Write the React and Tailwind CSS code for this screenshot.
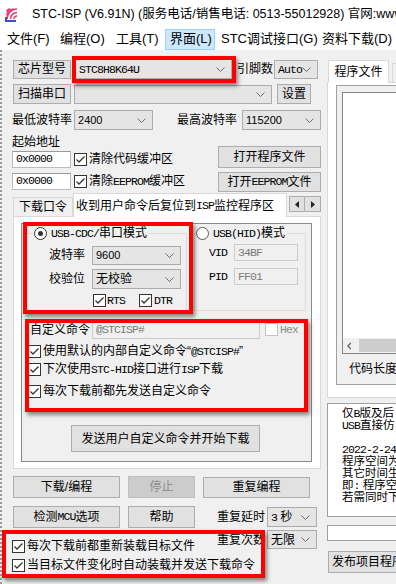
import React from "react";

const MONO = "font-['Liberation_Mono',monospace] text-[11.5px] tracking-[-0.9px]";

// ASCII runs are drawn in a narrow mono face, like SimSun's half-width glyphs
function T({ s }) {
  const parts = s.split(/([\x21-\x7e](?:[\x20-\x7e]*[\x21-\x7e])?)/);
  return parts.map((p, i) =>
    i % 2 === 1 ? (
      <span key={i} className={MONO}>
        {p}
      </span>
    ) : (
      p
    )
  );
}

function Chevron() {
  return (
    <svg width="9" height="5" viewBox="0 0 9 5" className="shrink-0">
      <path d="M0.5 0.5 L4.5 4.5 L8.5 0.5" fill="none" stroke="#6d6d6d" strokeWidth="1" />
    </svg>
  );
}

function Check({ on = true, dim = false }) {
  return (
    <span
      className={`flex h-[13px] w-[13px] shrink-0 items-center justify-center border bg-white ${
        dim ? "border-[#c4c4c4]" : "border-[#333333]"
      }`}
    >
      {on && (
        <svg width="11" height="11" viewBox="0 0 11 11">
          <path d="M1.5 5.5 L4 8 L9.5 2.5" fill="none" stroke="#333333" strokeWidth="1.3" />
        </svg>
      )}
    </span>
  );
}

function Radio({ on = false }) {
  return (
    <span
      className={`flex h-[13px] w-[13px] shrink-0 items-center justify-center rounded-full border bg-white ${
        on ? "border-[#333333]" : "border-[#5a5a5a]"
      }`}
    >
      {on && <span className="h-[5px] w-[5px] rounded-full bg-[#333333]" />}
    </span>
  );
}

function Btn({ className = "", disabled = false, children }) {
  return (
    <div
      className={`flex shrink-0 items-center justify-center whitespace-nowrap border ${
        disabled
          ? "border-[#bfbfbf] bg-[#cccccc] text-[#8d8d8d]"
          : "border-[#adadad] bg-[#e1e1e1] text-black"
      } ${className}`}
    >
      {children}
    </div>
  );
}

function Combo({ className = "", children }) {
  return (
    <div
      className={`flex shrink-0 items-center justify-between border border-[#acacac] bg-[#e5e5e5] pl-[3px] pr-[6px] ${className}`}
    >
      <span className="whitespace-nowrap">{children}</span>
      <Chevron />
    </div>
  );
}

function Field({ className = "", disabled = false, children }) {
  return (
    <div
      className={`flex shrink-0 items-center border pl-[3px] ${
        disabled
          ? "border-[#cccccc] bg-[#f0f0f0] text-[#7a7a7a]"
          : "border-[#bcbcbc] border-t-[#9a9a9a] bg-white"
      } ${className}`}
    >
      {children}
    </div>
  );
}

function CheckRow({ className = "", children }) {
  return (
    <div className={`flex h-[14px] items-center whitespace-nowrap ${className}`}>
      <Check />
      <span className="ml-[2px]">{children}</span>
    </div>
  );
}

function Logo() {
  return (
    <svg width="20" height="17" viewBox="0 0 20 17">
      <path d="M3 13 A10 10 0 0 1 13 3" fill="none" stroke="#ec3a74" strokeWidth="1.6" />
      <path d="M3 9.5 A6.5 6.5 0 0 1 9.5 3" fill="none" stroke="#ec3a74" strokeWidth="1.6" />
      <path d="M6.5 13 A6.5 6.5 0 0 1 13 6.5" fill="none" stroke="#ec3a74" strokeWidth="1.6" />
      <path d="M10 13 A3 3 0 0 1 13 10" fill="none" stroke="#ec3a74" strokeWidth="1.6" />
      <path d="M3 6 A3 3 0 0 1 6 3" fill="none" stroke="#ec3a74" strokeWidth="1.6" />
      <rect x="1" y="14" width="11" height="2" fill="#3c4fd0" />
      <rect x="1" y="11" width="2" height="3" fill="#3c4fd0" />
    </svg>
  );
}

const menus = [
  { label: "文件(F)", cls: "w-[53px]" },
  { label: "编程(O)", cls: "w-[56px]" },
  { label: "工具(T)", cls: "w-[53px]" },
  { label: "界面(L)", cls: "w-[50px] mr-[2px] bg-[#cce8ff] border border-[#99d1ff]" },
  { label: "STC调试接口(G)", cls: "w-[101px]" },
  { label: "资料下载(D)", cls: "w-[80px]" },
];

const notes = ["仅B版及后", "USB直接仿", "", "2022-2-24", "程序空间为", "其它时间生", "即: 程序空", "若需同时下"];

export default function App() {
  return (
    <div className="relative h-[584px] w-[396px] overflow-hidden bg-[#f0f0f0] font-['Liberation_Sans','Noto_Sans_CJK_SC',sans-serif] text-[12px] leading-[14px] text-black">
      {/* title bar */}
      <div className="flex h-[28px] items-center bg-white">
        <div className="ml-[4px]">
          <Logo />
        </div>
        <span className="ml-[8px] whitespace-nowrap text-[12.5px]">
          STC-ISP (V6.91N) (服务电话/销售电话: 0513-55012928) 官网:www.stcmcudata.com
        </span>
      </div>

      {/* menu bar */}
      <div className="flex h-[22px] items-center bg-white pl-[3px] text-[13px]">
        {menus.map((m) => (
          <div key={m.label} className={`flex h-[21px] shrink-0 items-center whitespace-nowrap px-[4px] ${m.cls}`}>
            {m.label}
          </div>
        ))}
      </div>

      <div className="flex h-[534px]">
        <div className="w-[3px] shrink-0 border-l-2 border-dotted border-[#9a9a9a]" />

        {/* left column */}
        <div className="w-[321px] shrink-0">
          <div className="mt-[9px] flex h-[20px] items-center">
            <Btn className="ml-[10px] h-[19px] w-[58px]">芯片型号</Btn>
            <Combo className="ml-[4px] h-[20px] w-[157px]">
              <T s="STC8H8K64U" />
            </Combo>
            <span className="ml-[5px] whitespace-nowrap">引脚数</span>
            <Combo className="ml-[1px] h-[19px] w-[44px]">
              <T s="Auto" />
            </Combo>
          </div>

          <div className="mt-[5px] flex h-[20px] items-center">
            <Btn className="ml-[10px] h-[20px] w-[58px]">扫描串口</Btn>
            <Combo className="ml-[3px] h-[19px] w-[198px]" />
            <Btn className="ml-[5px] h-[20px] w-[34px]">设置</Btn>
          </div>

          <div className="mt-[6px] flex h-[20px] items-center">
            <span className="ml-[9px] whitespace-nowrap">最低波特率</span>
            <Combo className="ml-[2px] h-[20px] w-[79px] text-[11px]">2400</Combo>
            <span className="ml-[24px] whitespace-nowrap">最高波特率</span>
            <Combo className="ml-[5px] h-[20px] w-[79px] text-[11px]">115200</Combo>
          </div>

          <div className="mt-[4px] flex">
            <div className="ml-[9px]">
              <div className="flex h-[16px] items-center">起始地址</div>
              <div className="flex h-[18px] items-center">
                <Field className="h-[17px] w-[59px]">
                  <T s="0x0000" />
                </Field>
                <div className="ml-[3px]">
                  <CheckRow>清除代码缓冲区</CheckRow>
                </div>
              </div>
              <div className="mt-[4px] flex h-[18px] items-center">
                <Field className="h-[17px] w-[59px]">
                  <T s="0x0000" />
                </Field>
                <div className="ml-[3px]">
                  <CheckRow>
                    <T s="清除EEPROM缓冲区" />
                  </CheckRow>
                </div>
              </div>
            </div>
            <div className="ml-auto mr-[3px] pt-[12px]">
              <Btn className="h-[22px] w-[103px]">打开程序文件</Btn>
              <Btn className="mt-[4px] h-[20px] w-[103px]">
                <T s="打开EEPROM文件" />
              </Btn>
            </div>
          </div>

          {/* tabs */}
          <div className="mt-[1px] flex h-[23px] items-end">
            <div className="ml-[10px] flex h-[19px] w-[60px] items-center justify-center border border-b-0 border-[#d9d9d9] bg-[#f0f0f0]">
              下载口令
            </div>
            <div className="relative z-10 -mb-px flex h-[24px] w-[214px] items-center overflow-hidden whitespace-nowrap border border-b-0 border-[#d9d9d9] bg-white pl-[2px]">
              <T s="收到用户命令后复位到ISP监控程序区" />
            </div>
            <div className="mb-[4px] ml-[2px] flex self-end">
              <div className="flex h-[16px] w-[16px] items-center justify-center border border-[#adadad] bg-[#e1e1e1]">
                <svg width="4" height="7" viewBox="0 0 4 7">
                  <path d="M4 0 L0 3.5 L4 7 Z" fill="#222" />
                </svg>
              </div>
              <div className="flex h-[16px] w-[16px] items-center justify-center border border-l-0 border-[#adadad] bg-[#e1e1e1]">
                <svg width="4" height="7" viewBox="0 0 4 7">
                  <path d="M0 0 L4 3.5 L0 7 Z" fill="#222" />
                </svg>
              </div>
            </div>
          </div>

          {/* tab page */}
          <div className="ml-[10px] h-[253px] w-[308px] border border-[#d9d9d9] bg-white">
            <div className="ml-[7px] mt-[6px] h-[239px] w-[291px] border border-[#8a8a8a] bg-[#f0f0f0]">
              <div className="mt-[2px] flex">
                <fieldset className="ml-[4px] h-[85px] w-[161px] border border-[#dcdcdc]">
                  <legend className="ml-[6px] px-[1px]">
                    <span className="flex h-[14px] items-center">
                      <Radio on />
                      <span className="ml-[4px] whitespace-nowrap">
                        <T s="USB-CDC/串口模式" />
                      </span>
                    </span>
                  </legend>
                  <div className="mt-[5px] flex h-[20px] items-center pl-[22px]">
                    <span className="w-[43px]">波特率</span>
                    <Combo className="h-[19px] w-[89px] text-[11px]">9600</Combo>
                  </div>
                  <div className="mt-[4px] flex h-[20px] items-center pl-[22px]">
                    <span className="w-[43px]">校验位</span>
                    <Combo className="h-[20px] w-[89px]">无校验</Combo>
                  </div>
                  <div className="mt-[5px] flex h-[13px] items-center pl-[66px]">
                    <Check />
                    <span className="ml-[1px]">
                      <T s="RTS" />
                    </span>
                    <span className="ml-[14px]">
                      <Check />
                    </span>
                    <span className="ml-[2px]">
                      <T s="DTR" />
                    </span>
                  </div>
                </fieldset>

                <fieldset className="ml-[7px] h-[85px] w-[112px] border border-[#dcdcdc]">
                  <legend className="ml-[1px] pr-[2px]">
                    <span className="flex h-[14px] items-center">
                      <Radio />
                      <span className="ml-[4px] whitespace-nowrap">
                        <T s="USB(HID)模式" />
                      </span>
                    </span>
                  </legend>
                  <div className="mt-[4px] flex h-[17px] items-center pl-[14px]">
                    <span className="w-[25px]">
                      <T s="VID" />
                    </span>
                    <Field disabled className="h-[17px] w-[64px]">
                      <T s="34BF" />
                    </Field>
                  </div>
                  <div className="mt-[7px] flex h-[17px] items-center pl-[14px]">
                    <span className="w-[25px]">
                      <T s="PID" />
                    </span>
                    <Field disabled className="h-[17px] w-[64px]">
                      <T s="FF01" />
                    </Field>
                  </div>
                </fieldset>
              </div>

              <div className="mt-[9px] flex h-[19px] items-center">
                <span className="ml-[8px] whitespace-nowrap">自定义命令</span>
                <Field disabled className="ml-[2px] h-[19px] w-[168px]">
                  <T s="@STCISP#" />
                </Field>
                <span className="ml-[5px]">
                  <Check on={false} dim />
                </span>
                <span className="ml-[2px] text-[#8a8a8a]">
                  <T s="Hex" />
                </span>
              </div>

              <CheckRow className="ml-[6px] mt-[5px]">
                <T s="使用默认的内部自定义命令“@STCISP#”" />
              </CheckRow>
              <CheckRow className="ml-[6px] mt-[4px]">
                <T s="下次使用STC-HID接口进行ISP下载" />
              </CheckRow>
              <CheckRow className="ml-[6px] mt-[8px]">每次下载前都先发送自定义命令</CheckRow>

              <Btn className="ml-[49px] mt-[27px] h-[27px] w-[189px]">发送用户自定义命令并开始下载</Btn>
            </div>
          </div>

          {/* action buttons */}
          <div className="mt-[7px] flex h-[22px] items-center">
            <Btn className="ml-[10px] h-[22px] w-[107px]">下载/编程</Btn>
            <Btn disabled className="ml-[8px] h-[22px] w-[67px]">
              停止
            </Btn>
            <Btn className="ml-[8px] h-[21px] w-[107px]">重复编程</Btn>
          </div>

          <div className="mt-[8px] flex h-[22px] items-center">
            <Btn className="ml-[10px] h-[22px] w-[107px]">
              <T s="检测MCU选项" />
            </Btn>
            <Btn className="ml-[8px] h-[22px] w-[67px]">帮助</Btn>
            <span className="ml-[22px] whitespace-nowrap">重复延时</span>
            <Combo className="ml-[2px] h-[20px] w-[50px]">
              <T s="3 秒" />
            </Combo>
          </div>

          <div className="mt-[2px] flex h-[23px]">
            <div className="w-[214px] shrink-0 self-end pl-[9px]">
              <CheckRow>每次下载前都重新装载目标文件</CheckRow>
            </div>
            <div className="flex h-[19px] items-center">
              <span className="whitespace-nowrap">重复次数</span>
              <Combo className="ml-[2px] h-[19px] w-[50px]">无限</Combo>
            </div>
          </div>
          <CheckRow className="ml-[9px] mt-[5px]">当目标文件变化时自动装载并发送下载命令</CheckRow>
        </div>

        {/* right column */}
        <div className="w-[72px] shrink-0">
          <div className="mt-[10px] flex h-[22px] items-end pl-[4px]">
            <div className="relative z-10 -mb-px flex h-[23px] w-[61px] shrink-0 items-center justify-center whitespace-nowrap border border-b-0 border-[#d9d9d9] bg-white">
              程序文件
            </div>
            <div className="ml-[3px] h-[19px] w-[12px] shrink-0 border border-b-0 border-[#d9d9d9] bg-[#f0f0f0]" />
          </div>
          <div className="ml-[3px] h-[316px] w-[80px] border border-[#d9d9d9] bg-white">
            <div className="ml-[8px] mt-[2px] h-[300px] w-[70px] border border-[#a0a0a0] bg-[#f0f0f0]">
              <div className="ml-[5px] mt-[6px] flex h-[262px] w-[70px] flex-col justify-end border border-[#828790] bg-white">
                <div className="flex h-[15px] items-center bg-[#f0f0f0] pl-[4px] text-[#606060]">
                  <svg width="5" height="8" viewBox="0 0 5 8">
                    <path d="M4.5 0.5 L1 4 L4.5 7.5" fill="none" stroke="#606060" strokeWidth="1.4" />
                  </svg>
                  <div className="ml-[8px] h-[13px] w-[60px] bg-[#cdcdcd]" />
                </div>
              </div>
              <div className="mt-[8px] whitespace-nowrap pl-[12px]">代码长度</div>
            </div>
          </div>

          <div className="ml-[3px] mt-[5px] h-[114px] w-[80px] overflow-hidden border border-[#a0a0a0] bg-white pl-[14px] pt-[3px] text-[11.5px] leading-[12px]">
            {notes.map((n, i) => (
              <div key={i} className="h-[12px] overflow-hidden whitespace-nowrap">
                <T s={n} />
              </div>
            ))}
          </div>

          <div className="ml-[3px] mt-[8px] h-[16px] w-[80px] border border-[#a0a0a0] bg-white" />

          <Btn className="ml-[4px] mt-[10px] h-[22px] w-[90px] !justify-start pl-[3px]">发布项目程序</Btn>
        </div>
      </div>

      {/* red highlight annotations */}
      <div className="pointer-events-none absolute left-[72px] top-[56px] h-[27px] w-[164px] border-4 border-[#ff0000] shadow-[2px_3px_4px_rgba(0,0,0,0.45)]" />
      <div className="pointer-events-none absolute left-[23px] top-[222px] h-[92px] w-[170px] border-4 border-[#ff0000] shadow-[2px_3px_4px_rgba(0,0,0,0.45)]" />
      <div className="pointer-events-none absolute left-[25px] top-[319px] h-[93px] w-[283px] border-4 border-[#ff0000] shadow-[2px_3px_4px_rgba(0,0,0,0.45)]" />
      <div className="pointer-events-none absolute left-[2px] top-[530px] h-[48px] w-[263px] border-4 border-[#ff0000] shadow-[2px_3px_4px_rgba(0,0,0,0.45)]" />
    </div>
  );
}
